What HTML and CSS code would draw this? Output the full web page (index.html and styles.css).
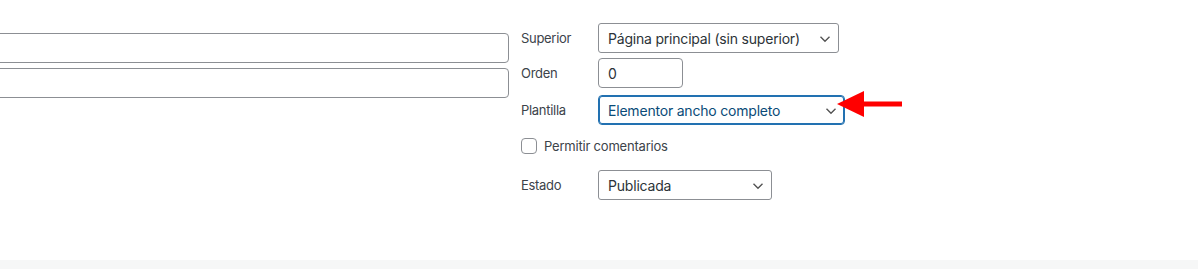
FILE: index.html
```html
<!DOCTYPE html>
<html lang="es">
<head>
    <meta charset="UTF-8">
    <meta name="viewport" content="width=device-width, initial-scale=1.0">
    <title>Edición rápida</title>
    <link rel="stylesheet" href="styles.css">
</head>
<body>
    <div class="quick-edit">
        <div class="col-left">
            <input type="text" class="wide-input" value="">
            <input type="text" class="wide-input" value="">
        </div>

        <div class="col-right">
            <div class="row row-parent">
                <label class="title" for="parent">Superior</label>
                <select id="parent" class="sel sel-parent">
                    <option>Página principal (sin superior)</option>
                </select>
            </div>
            <div class="row row-order">
                <label class="title" for="order">Orden</label>
                <input type="text" id="order" class="small-input" value="0">
            </div>
            <div class="row row-template">
                <label class="title" for="template">Plantilla</label>
                <select id="template" class="sel sel-template focused">
                    <option>Elementor ancho completo</option>
                </select>
            </div>
            <div class="row row-check">
                <label class="check-label">
                    <input type="checkbox" class="check">
                    <span>Permitir comentarios</span>
                </label>
            </div>
            <div class="row row-status">
                <label class="title" for="status">Estado</label>
                <select id="status" class="sel sel-status">
                    <option>Publicada</option>
                </select>
            </div>
        </div>
    </div>

    <!-- red annotation arrow pointing at the template select -->
    <svg class="annot-arrow" width="72" height="32" viewBox="0 0 72 32">
        <polygon points="1,16 28,3 28,29" fill="#ff0000"/>
        <rect x="26" y="13.5" width="40" height="5" fill="#ff0000"/>
    </svg>

    <div class="footer-band"></div>
</body>
</html>
```

FILE: styles.css
```css
body {
    margin: 0;
    background: #fff;
    font-family: Inter, "Noto Sans", sans-serif;
    color: #3c434a;
    font-size: 13px;
    overflow: hidden;
}

.quick-edit {
    display: flex;
    margin-left: -300px;
    height: 260px;
}

/* left column: title + slug inputs, cut by the window edge */
.col-left {
    width: 809px;
    padding-top: 33px;
    display: flex;
    flex-direction: column;
    gap: 5px;
}

.wide-input {
    height: 30px;
    box-sizing: border-box;
    border: 1px solid #8c8f94;
    border-radius: 4px;
    background: #fff;
    margin: 0;
}

.col-right {
    margin-left: 12px;
    padding-top: 23px;
}

.row {
    display: flex;
    align-items: center;
}

.title {
    width: 77px;
    font-size: 13px;
    letter-spacing: -0.3px;
    color: #3c434a;
}

.sel {
    -webkit-appearance: none;
    appearance: none;
    height: 30px;
    box-sizing: border-box;
    border: 1px solid #8c8f94;
    border-radius: 3px;
    padding: 0 24px 0 9px;
    font-family: inherit;
    font-size: 14px;
    letter-spacing: -0.2px;
    color: #2c3338;
    background: #fff url("data:image/svg+xml;utf8,<svg xmlns='http://www.w3.org/2000/svg' width='12' height='8' viewBox='0 0 12 8'><path d='M1.5 1.8 6 6.2 10.5 1.8' fill='none' stroke='%23555' stroke-width='1.4'/></svg>") no-repeat right 7px top 55%;
    margin: 0;
}

.sel-parent {
    width: 241px;
}

.row-order {
    margin-top: 5px;
}

.small-input {
    width: 85px;
    height: 30px;
    box-sizing: border-box;
    border: 1px solid #8c8f94;
    border-radius: 4px;
    padding: 0 9px;
    font-family: inherit;
    font-size: 14px;
    color: #2c3338;
    margin: 0;
}

.row-template {
    margin-top: 7px;
}

.sel-template {
    width: 247px;
}

.focused {
    border-color: #2271b1;
    box-shadow: inset 0 0 0 1px #2271b1;
    color: #0a4b78;
    border-radius: 4px;
}

.row-check {
    margin-top: 13px;
}

.check-label {
    display: flex;
    align-items: center;
    gap: 7px;
    font-size: 13px;
    letter-spacing: -0.2px;
    color: #3c434a;
}

.check {
    -webkit-appearance: none;
    appearance: none;
    width: 16px;
    height: 16px;
    margin: 0;
    border: 1px solid #8c8f94;
    border-radius: 4px;
    background: #fff;
}

.row-status {
    margin-top: 16px;
}

.sel-status {
    width: 174px;
}

.annot-arrow {
    position: absolute;
    left: 836px;
    top: 88px;
}

.footer-band {
    height: 9px;
    background: #f6f7f7;
}
```
